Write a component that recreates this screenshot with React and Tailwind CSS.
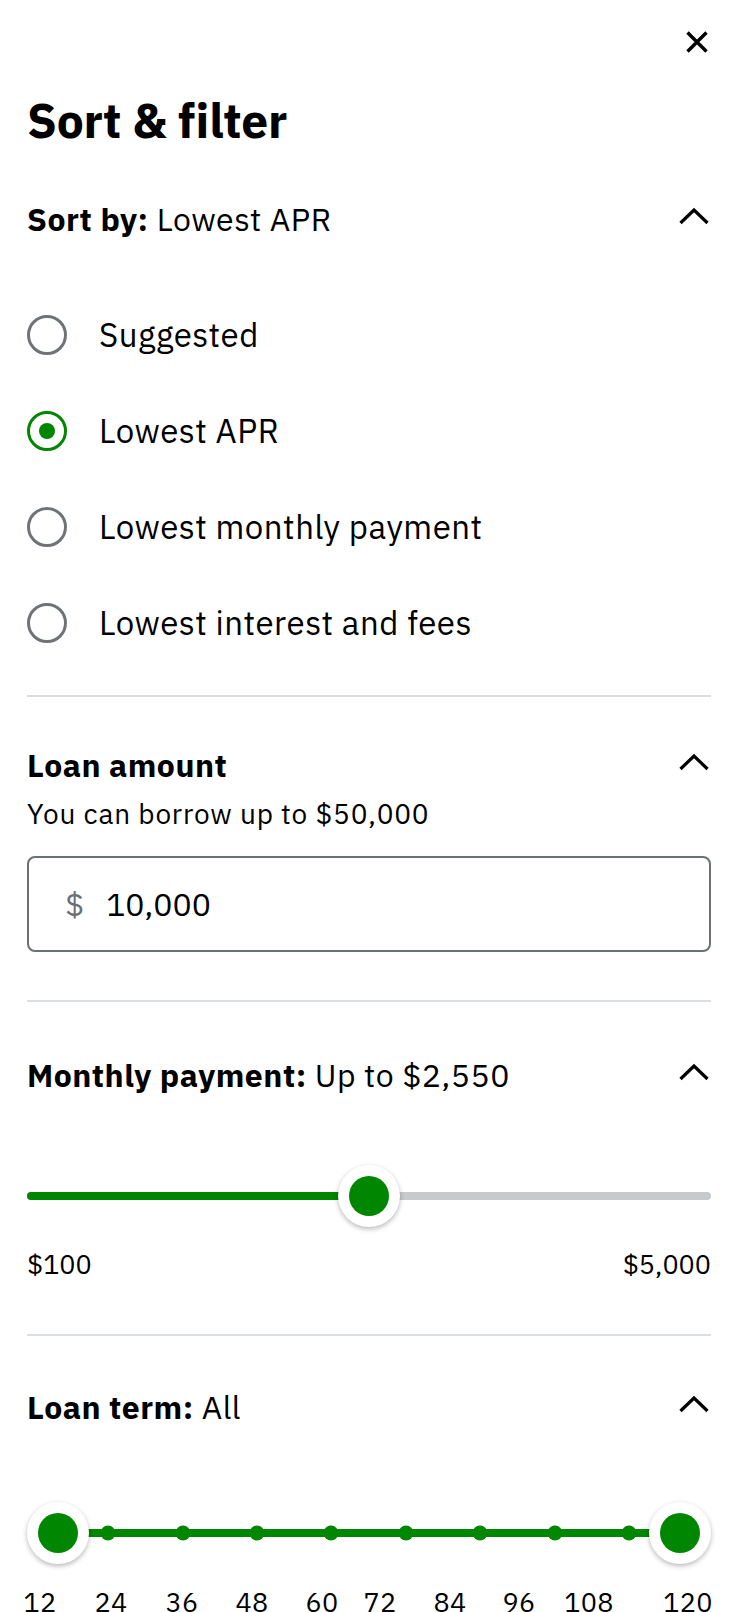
import React from "react";

function Chevron() {
  return (
    <svg width="30" height="18" viewBox="0 0 30 18" fill="none" className="shrink-0">
      <polyline points="1.5,16 15,3 28.5,16" stroke="#000" strokeWidth="3.2" strokeLinecap="butt" strokeLinejoin="miter" />
    </svg>
  );
}

function SectionHeader({ bold, rest }) {
  return (
    <div className="flex h-[40px] items-center justify-between">
      <div className="text-[32px] leading-[40px] tracking-[0.5px] text-black">
        <span className="font-bold">{bold}</span>
        {rest ? <span className="font-normal"> {rest}</span> : null}
      </div>
      <div className="mr-[2px] -mt-[6px]">
        <Chevron />
      </div>
    </div>
  );
}

function Radio({ label, checked }) {
  return (
    <div className="flex h-[96px] items-center">
      {checked ? (
        <div className="flex h-[40px] w-[40px] items-center justify-center rounded-full border-[3px] border-[#008600]">
          <div className="h-[16px] w-[16px] rounded-full bg-[#008600]" />
        </div>
      ) : (
        <div className="h-[40px] w-[40px] rounded-full border-[3px] border-[#6f7377]" />
      )}
      <span className="ml-[32px] text-[33px] leading-[40px] tracking-[0.5px] text-black">{label}</span>
    </div>
  );
}

function Knob({ style }) {
  return (
    <div
      className="absolute top-1/2 flex h-[62px] w-[62px] -translate-x-1/2 -translate-y-1/2 items-center justify-center rounded-full bg-white shadow-[0_2px_5px_rgba(0,0,0,0.28)]"
      style={style}
    >
      <div className="h-[40px] w-[40px] rounded-full bg-[#008600]" />
    </div>
  );
}

const dotOffsets = [81, 156, 230, 304, 379, 453, 528, 602];
const labels = [
  ["12", 13],
  ["24", 84],
  ["36", 155],
  ["48", 225],
  ["60", 295],
  ["72", 353],
  ["84", 423],
  ["96", 492],
  ["108", 562],
  ["120", 661],
];

export default function App() {
  return (
    <div className="min-h-[1612px] overflow-hidden bg-white pl-[27px] pr-[33px] font-['IBM_Plex_Sans',sans-serif] text-black">
      {/* close */}
      <div className="flex justify-end pt-[31px]">
        <svg width="22" height="22" viewBox="0 0 22 22" className="mr-[3px]">
          <path d="M1.5 1.5 L20.5 20.5 M20.5 1.5 L1.5 20.5" stroke="#000" strokeWidth="3.4" />
        </svg>
      </div>

      <h1 className="mt-[39px] text-[48px] font-bold leading-[56px] tracking-[-0.2px]">Sort &amp; filter</h1>

      {/* sort by */}
      <div className="mt-[51px]">
        <SectionHeader bold="Sort by:" rest="Lowest APR" />
      </div>
      <div className="mt-[48px] flex flex-col">
        <Radio label="Suggested" />
        <Radio label="Lowest APR" checked />
        <Radio label="Lowest monthly payment" />
        <Radio label="Lowest interest and fees" />
      </div>

      <div className="mt-[24px] h-[2px] bg-[#dcdfe2]" />

      {/* loan amount */}
      <div className="mt-[48px]">
        <SectionHeader bold="Loan amount" />
      </div>
      <p className="mt-[11px] text-[28px] leading-[36px] tracking-[0.8px]">You can borrow up to $50,000</p>
      <div className="mt-[24px] flex h-[96px] items-center rounded-[8px] border-2 border-[#6b7073] pl-[36px]">
        <span className="text-[32px] text-[#6b7073]">$</span>
        <span className="ml-[22px] text-[32px]">10,000</span>
      </div>

      <div className="mt-[48px] h-[2px] bg-[#dcdfe2]" />

      {/* monthly payment */}
      <div className="mt-[53px]">
        <SectionHeader bold="Monthly payment:" rest="Up to $2,550" />
      </div>
      <div className="relative mt-[69px] h-[64px]">
        <div className="absolute left-0 right-0 top-1/2 flex h-[8px] -translate-y-1/2 overflow-hidden rounded-full bg-[#c6cacd]">
          <div className="h-full w-[342px] bg-[#008600]" />
        </div>
        <Knob style={{ left: 342 }} />
      </div>
      <div className="mt-[18px] flex justify-between text-[27px] leading-[36px]">
        <span>$100</span>
        <span>$5,000</span>
      </div>

      <div className="mt-[52px] h-[2px] bg-[#dcdfe2]" />

      {/* loan term */}
      <div className="mt-[51px]">
        <SectionHeader bold="Loan term:" rest="All" />
      </div>
      <div className="relative mt-[74px] h-[64px]">
        <div className="absolute left-[31px] right-[31px] top-1/2 h-[8px] -translate-y-1/2 bg-[#008600]" />
        {dotOffsets.map((x) => (
          <div
            key={x}
            className="absolute top-1/2 h-[15px] w-[15px] -translate-x-1/2 -translate-y-1/2 rounded-full bg-[#008600]"
            style={{ left: x }}
          />
        ))}
        <Knob style={{ left: 31 }} />
        <Knob style={{ left: 653 }} />
      </div>
      <div className="relative mt-[19px] h-[36px]">
        {labels.map(([t, x]) => (
          <span
            key={t}
            className="absolute top-0 -translate-x-1/2 text-[27px] leading-[36px] tracking-[0.3px]"
            style={{ left: x }}
          >
            {t}
          </span>
        ))}
      </div>
    </div>
  );
}
